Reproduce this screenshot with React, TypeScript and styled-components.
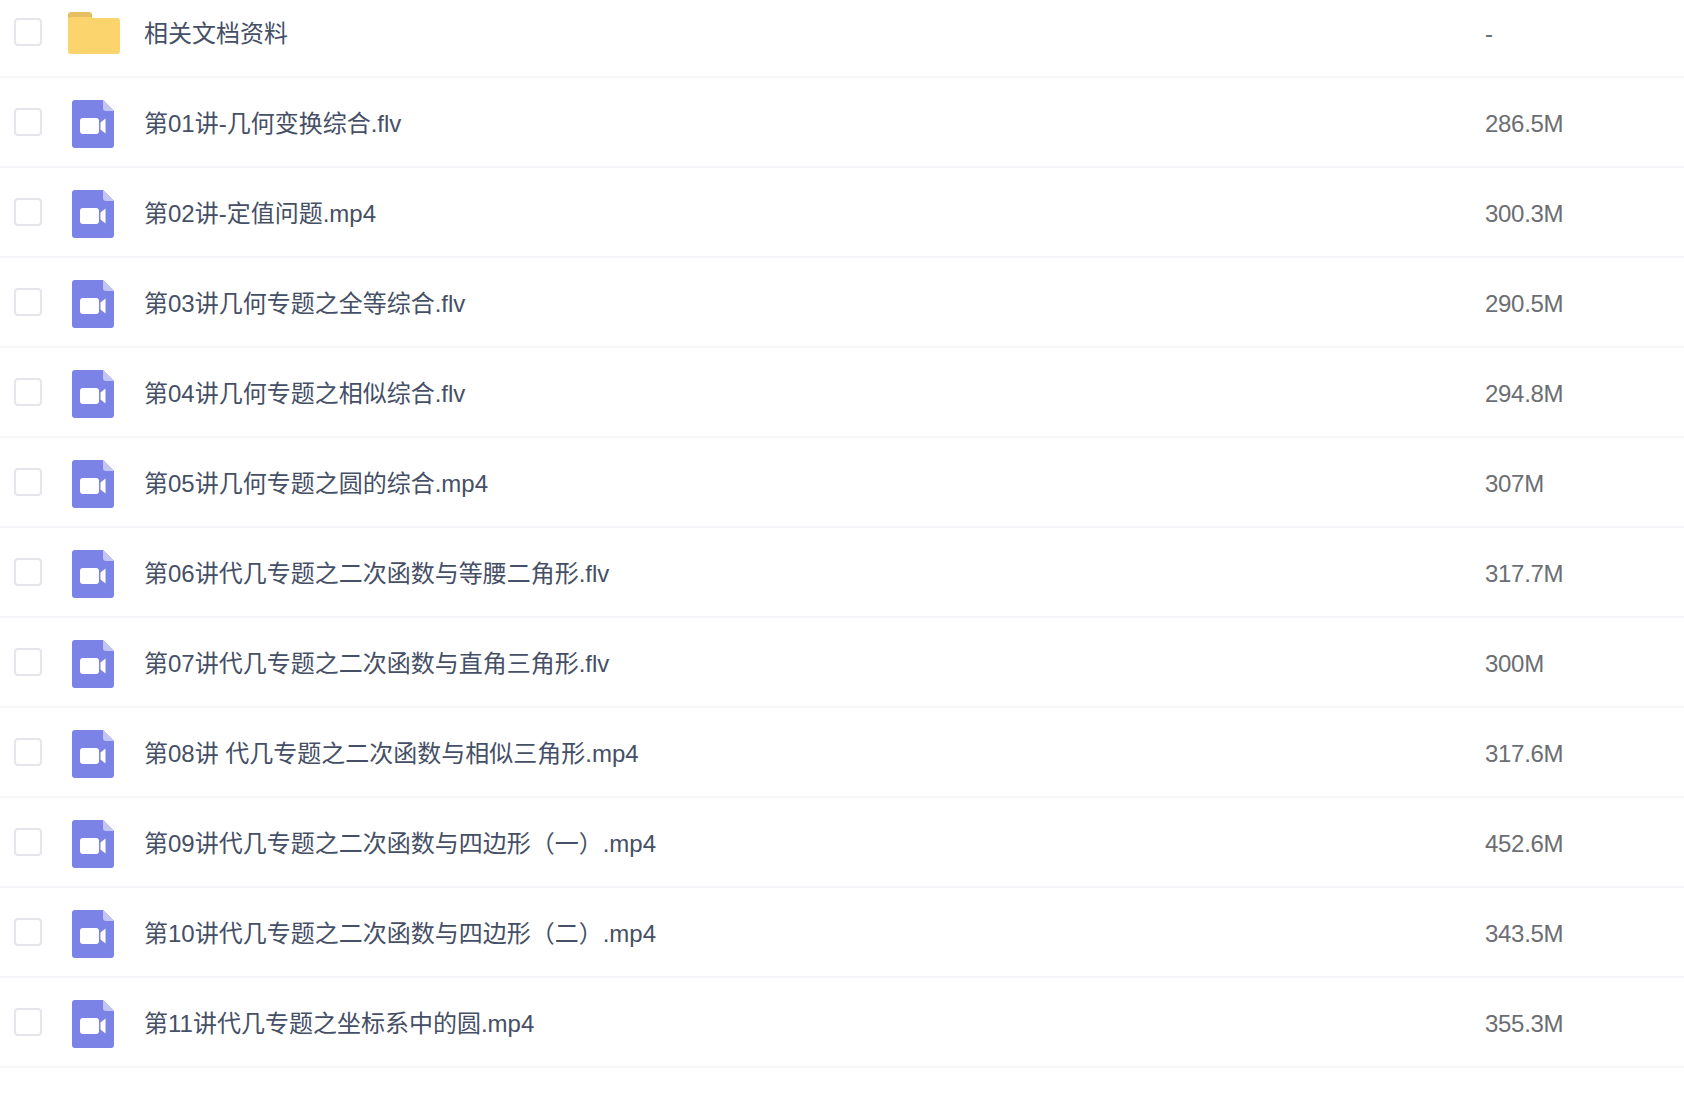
import React from "react";
import styled, { createGlobalStyle } from "styled-components";

const Global = createGlobalStyle`
  html, body { margin: 0; padding: 0; background: #fff; overflow: hidden; }
  body { width: 1684px; height: 1116px; font-family: "Liberation Sans", "Noto Sans CJK SC", sans-serif; }
`;

const List = styled.ul`
  list-style: none;
  margin: -12px 0 0;
  padding: 0;
`;

const Row = styled.li`
  display: flex;
  align-items: center;
  height: 90px;
  box-sizing: border-box;
  border-bottom: 2px solid #f5f6f9;
`;

const Check = styled.span`
  flex: none;
  width: 28px;
  height: 28px;
  box-sizing: border-box;
  margin: -1px 0 0 14px;
  border: 2px solid #e4e6ec;
  border-radius: 4px;
  background: #fff;
`;

const IconSlot = styled.span`
  flex: none;
  width: 52px;
  margin: 2px 0 0 26px;
  display: flex;
  justify-content: center;
`;

const Name = styled.span`
  flex: none;
  width: 1341px;
  margin: 4px 0 0 24px;
  font-size: 24px;
  line-height: 32px;
  color: #454f66;
  white-space: pre;
`;

const Size = styled.span`
  margin-top: 3px;
  font-size: 24px;
  line-height: 32px;
  letter-spacing: -0.3px;
  color: #6b6e73;
`;

const FolderSvg = styled.svg`
  display: block;
  margin-top: -2px;
`;

const VideoSvg = styled.svg`
  display: block;
  margin: 2px 2px 0 0;
`;

const FolderIcon = () => (
  <FolderSvg width="52" height="43" viewBox="0 0 52 43">
    <path d="M0 4a3 3 0 0 1 3-3h18a3 3 0 0 1 3 3v6H0z" fill="#e5bf61" />
    <path d="M0 9a3 3 0 0 1 3-3h19l2 1h25a3 3 0 0 1 3 3v30a3 3 0 0 1-3 3H3a3 3 0 0 1-3-3z" fill="#fbd46e" />
  </FolderSvg>
);

const VideoIcon = () => (
  <VideoSvg width="42" height="48" viewBox="0 0 42 48">
    <path d="M3 0h28l11 11v34a3 3 0 0 1-3 3H3a3 3 0 0 1-3-3V3a3 3 0 0 1 3-3z" fill="#7c83e6" />
    <path d="M31 0l11 11h-8a3 3 0 0 1-3-3z" fill="#c3c6f4" />
    <rect x="8" y="18" width="19" height="16" rx="3" fill="#fff" />
    <path d="M33.5 18.5v15l-5-4v-7z" fill="#fff" />
  </VideoSvg>
);

type Item = { name: string; size: string; folder?: boolean };

const items: Item[] = [
  { name: "相关文档资料", size: "-", folder: true },
  { name: "第01讲-几何变换综合.flv", size: "286.5M" },
  { name: "第02讲-定值问题.mp4", size: "300.3M" },
  { name: "第03讲几何专题之全等综合.flv", size: "290.5M" },
  { name: "第04讲几何专题之相似综合.flv", size: "294.8M" },
  { name: "第05讲几何专题之圆的综合.mp4", size: "307M" },
  { name: "第06讲代几专题之二次函数与等腰二角形.flv", size: "317.7M" },
  { name: "第07讲代几专题之二次函数与直角三角形.flv", size: "300M" },
  { name: "第08讲 代几专题之二次函数与相似三角形.mp4", size: "317.6M" },
  { name: "第09讲代几专题之二次函数与四边形（一）.mp4", size: "452.6M" },
  { name: "第10讲代几专题之二次函数与四边形（二）.mp4", size: "343.5M" },
  { name: "第11讲代几专题之坐标系中的圆.mp4", size: "355.3M" },
];

export default function App() {
  return (
    <>
      <Global />
      <List>
        {items.map((it) => (
          <Row key={it.name}>
            <Check />
            <IconSlot>{it.folder ? <FolderIcon /> : <VideoIcon />}</IconSlot>
            <Name>{it.name}</Name>
            <Size>{it.size}</Size>
          </Row>
        ))}
      </List>
    </>
  );
}
